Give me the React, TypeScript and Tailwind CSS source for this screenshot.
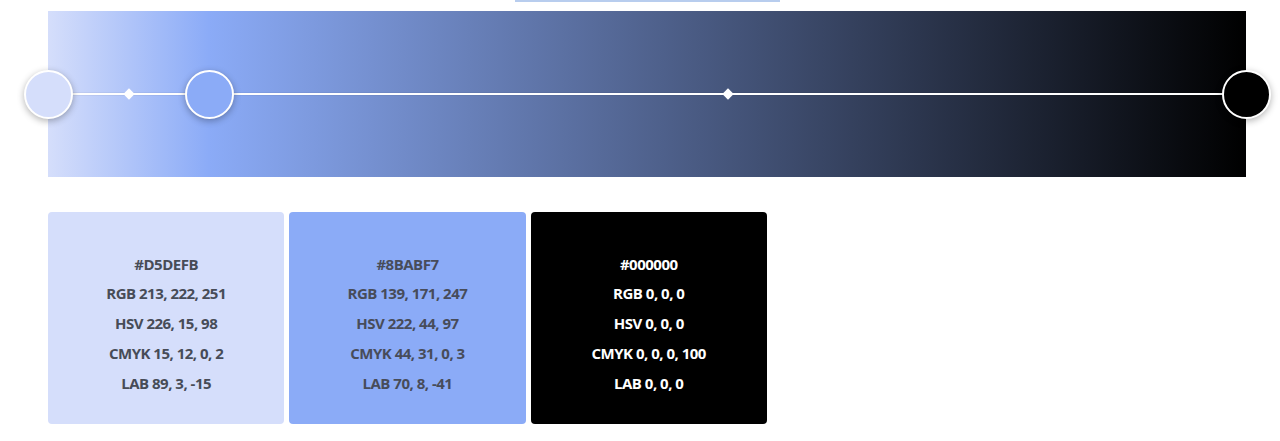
// Gradient editor — stops on a bar with colour swatches below.

const STOPS = [
  { pos: 0, hex: "#D5DEFB" },
  { pos: 13.44, hex: "#8BABF7" },
  { pos: 100, hex: "#000000" },
];

const MIDPOINTS = [6.76, 56.72];

const SWATCHES = [
  {
    hex: "#D5DEFB",
    bg: "bg-[#d5defb]",
    text: "text-[#474c57]",
    lines: ["#D5DEFB", "RGB 213, 222, 251", "HSV 226, 15, 98", "CMYK 15, 12, 0, 2", "LAB 89, 3, -15"],
  },
  {
    hex: "#8BABF7",
    bg: "bg-[#8babf7]",
    text: "text-[#474c5a]",
    lines: ["#8BABF7", "RGB 139, 171, 247", "HSV 222, 44, 97", "CMYK 44, 31, 0, 3", "LAB 70, 8, -41"],
  },
  {
    hex: "#000000",
    bg: "bg-black",
    text: "text-white",
    lines: ["#000000", "RGB 0, 0, 0", "HSV 0, 0, 0", "CMYK 0, 0, 0, 100", "LAB 0, 0, 0"],
  },
];

export default function App() {
  return (
    <div className="w-[1280px] h-[441px] bg-white relative overflow-hidden font-['Open_Sans',sans-serif]">
      <div className="absolute left-[515px] top-0 w-[265px] h-[2px] bg-[#b8cdee]" />

      <div className="flex flex-col gap-[35px] pl-[48px] pt-[11px]">
        <div
          className="relative w-[1198px] h-[166px] flex items-center"
          style={{
            background: `linear-gradient(to right, ${STOPS.map((s) => `${s.hex} ${s.pos}%`).join(", ")})`,
          }}
        >
          <div className="w-full h-[2px] bg-white shadow-[0_0_1px_rgba(0,0,0,0.4)]" />

          {MIDPOINTS.map((m) => (
            <div
              key={m}
              className="absolute top-[79px] w-[8px] h-[8px] -ml-[4px] bg-white rotate-45"
              style={{ left: `${m}%` }}
            />
          ))}

          {STOPS.map((s) => (
            <div
              key={s.hex}
              className="absolute top-[59px] w-[49px] h-[49px] -ml-[24.5px] rounded-full border-2 border-white shadow-[0_2px_7px_rgba(0,0,0,0.3)]"
              style={{ left: `${s.pos}%`, background: s.hex }}
            />
          ))}
        </div>

        <div className="flex gap-[5px]">
          {SWATCHES.map((sw) => (
            <div
              key={sw.hex}
              className={`w-[236.3px] h-[212px] rounded-[4px] flex flex-col items-center justify-center pt-[12px] ${sw.bg} ${sw.text}`}
            >
              {sw.lines.map((l) => (
                <p key={l} className="text-[15px] leading-[29.75px] font-bold tracking-[-0.5px]">
                  {l}
                </p>
              ))}
            </div>
          ))}
        </div>
      </div>
    </div>
  );
}
